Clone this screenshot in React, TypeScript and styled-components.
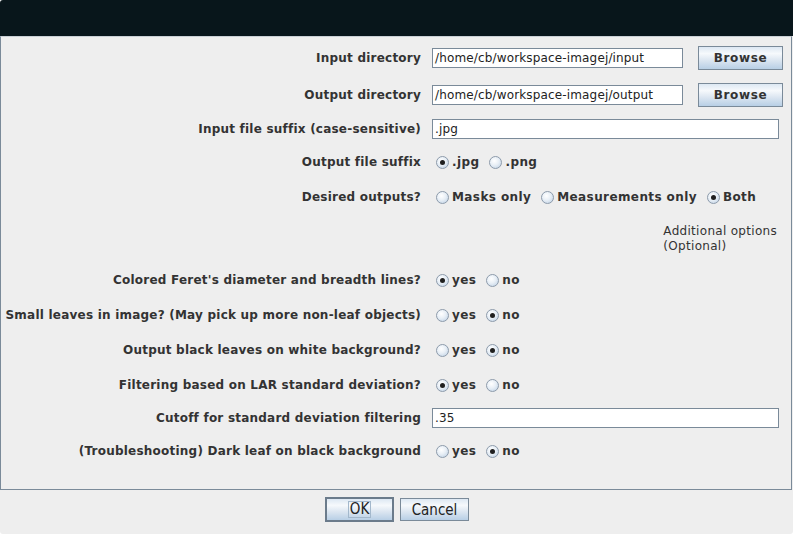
import React from 'react';
import styled, { createGlobalStyle } from 'styled-components';

const Global = createGlobalStyle`
  html, body { margin: 0; padding: 0; background: #ffffff; }
  body { font-family: "DejaVu Sans", "Liberation Sans", sans-serif; }
`;

const Window = styled.div`
  width: 793px;
  height: 534px;
  display: flex;
  flex-direction: column;
  background: #eeeeee;
  border-radius: 3px 0 3px 3px;
  overflow: hidden;
`;

const TitleBar = styled.div`
  height: 36px;
  flex-shrink: 0;
  background: #08161b;
`;

const Panel = styled.div`
  box-sizing: border-box;
  width: 792px;
  height: 454px;
  flex-shrink: 0;
  border: 1px solid #7a8a99;
  border-top-color: #c9d0d6;
  padding-top: 2px;
  display: flex;
  flex-direction: column;
`;

const Row = styled.div<{ $h: number }>`
  height: ${(p) => p.$h}px;
  display: grid;
  grid-template-columns: 420px 1fr;
  column-gap: 11px;
  align-items: center;
`;

const Label = styled.div`
  text-align: right;
  white-space: nowrap;
  font-weight: bold;
  font-size: 12px;
  letter-spacing: 0.22px;
  color: #333333;
`;

const Controls = styled.div`
  display: flex;
  align-items: center;
  padding-right: 12px;
`;

const TextField = styled.div<{ $w?: number }>`
  box-sizing: border-box;
  height: 20px;
  width: ${(p) => (p.$w ? `${p.$w}px` : '100%')};
  background: #ffffff;
  border: 1px solid #7a8a99;
  padding: 0 2px;
  display: flex;
  align-items: center;
  font-size: 12px;
  letter-spacing: 0.15px;
  color: #222222;
  white-space: nowrap;
  overflow: hidden;
`;

const BrowseButton = styled.button`
  box-sizing: border-box;
  width: 85px;
  height: 24px;
  margin-left: 15px;
  margin-right: -4px;
  border: 1px solid #7a8a99;
  background: linear-gradient(to bottom, #dde8f3 0%, #f6f9fc 30%, #dce6f1 60%, #b8cfe5 100%);
  font-family: "DejaVu Sans", sans-serif;
  font-weight: bold;
  font-size: 12px;
  letter-spacing: 0.6px;
  color: #333333;
  padding: 0;
`;

const RadioGroup = styled.div`
  display: flex;
  align-items: center;
  gap: 6px;
`;

const Option = styled.label`
  display: flex;
  align-items: center;
  padding-left: 4px;
  font-weight: bold;
  font-size: 12px;
  letter-spacing: 0.4px;
  color: #333333;
  white-space: nowrap;
`;

const Circle = styled.span<{ $on: boolean }>`
  box-sizing: border-box;
  width: 13px;
  height: 13px;
  margin-right: 3px;
  border-radius: 50%;
  border: 1px solid #8d9bab;
  background: radial-gradient(circle at 40% 35%, #ffffff 0%, #e8eff6 45%, #b9cde2 100%);
  display: flex;
  align-items: center;
  justify-content: center;
  &::after {
    content: '';
    display: ${(p) => (p.$on ? 'block' : 'none')};
    width: 5px;
    height: 5px;
    border-radius: 50%;
    background: #1f1f1f;
  }
`;

const Note = styled.div`
  margin-left: auto;
  margin-right: 2px;
  font-size: 12px;
  line-height: 15px;
  letter-spacing: 0.3px;
  color: #333333;
  white-space: nowrap;
`;

const ButtonBar = styled.div`
  flex: 1;
  display: flex;
  justify-content: center;
  align-items: flex-start;
  gap: 6px;
  padding-top: 7px;
  padding-left: 1px;
`;

const DialogButton = styled.button<{ $default?: boolean }>`
  box-sizing: border-box;
  width: 69px;
  height: ${(p) => (p.$default ? 25 : 23)}px;
  margin-top: ${(p) => (p.$default ? 0 : 1)}px;
  border: ${(p) => (p.$default ? '2px solid #6b7b8b' : '1px solid #7a8a99')};
  background: linear-gradient(to bottom, #dde8f3 0%, #f6f9fc 30%, #dce6f1 60%, #b8cfe5 100%);
  font-family: "DejaVu Sans Condensed", "DejaVu Sans", sans-serif;
  font-size: 15px;
  color: #222222;
  padding: 0;
  display: flex;
  align-items: center;
  justify-content: center;
`;

const Focus = styled.span`
  border: 1px solid #a3b8cc;
  padding: 0 1px;
  line-height: 15px;
`;

type Opt = { text: string; on: boolean };

function Radios({ options }: { options: Opt[] }) {
  return (
    <RadioGroup>
      {options.map((o) => (
        <Option key={o.text}>
          <Circle $on={o.on} />
          {o.text}
        </Option>
      ))}
    </RadioGroup>
  );
}

const yn = (yes: boolean): Opt[] => [
  { text: 'yes', on: yes },
  { text: 'no', on: !yes },
];

export default function App() {
  return (
    <>
      <Global />
      <Window>
        <TitleBar />
        <Panel>
          <Row $h={38}>
            <Label>Input directory</Label>
            <Controls>
              <TextField $w={251}>/home/cb/workspace-imagej/input</TextField>
              <BrowseButton>Browse</BrowseButton>
            </Controls>
          </Row>
          <Row $h={36}>
            <Label>Output directory</Label>
            <Controls>
              <TextField $w={251}>/home/cb/workspace-imagej/output</TextField>
              <BrowseButton>Browse</BrowseButton>
            </Controls>
          </Row>
          <Row $h={32}>
            <Label>Input file suffix (case-sensitive)</Label>
            <Controls>
              <TextField>.jpg</TextField>
            </Controls>
          </Row>
          <Row $h={34}>
            <Label>Output file suffix</Label>
            <Controls>
              <Radios options={[{ text: '.jpg', on: true }, { text: '.png', on: false }]} />
            </Controls>
          </Row>
          <Row $h={36}>
            <Label>Desired outputs?</Label>
            <Controls>
              <Radios
                options={[
                  { text: 'Masks only', on: false },
                  { text: 'Measurements only', on: false },
                  { text: 'Both', on: true },
                ]}
              />
            </Controls>
          </Row>
          <Row $h={48}>
            <Label />
            <Controls>
              <Note>
                Additional options
                <br />
                (Optional)
              </Note>
            </Controls>
          </Row>
          <Row $h={34}>
            <Label>Colored Feret's diameter and breadth lines?</Label>
            <Controls>
              <Radios options={yn(true)} />
            </Controls>
          </Row>
          <Row $h={36}>
            <Label>Small leaves in image? (May pick up more non-leaf objects)</Label>
            <Controls>
              <Radios options={yn(false)} />
            </Controls>
          </Row>
          <Row $h={34}>
            <Label>Output black leaves on white background?</Label>
            <Controls>
              <Radios options={yn(false)} />
            </Controls>
          </Row>
          <Row $h={36}>
            <Label>Filtering based on LAR standard deviation?</Label>
            <Controls>
              <Radios options={yn(true)} />
            </Controls>
          </Row>
          <Row $h={30}>
            <Label>Cutoff for standard deviation filtering</Label>
            <Controls>
              <TextField>.35</TextField>
            </Controls>
          </Row>
          <Row $h={36}>
            <Label>(Troubleshooting) Dark leaf on black background</Label>
            <Controls>
              <Radios options={yn(false)} />
            </Controls>
          </Row>
        </Panel>
        <ButtonBar>
          <DialogButton $default>
            <Focus>OK</Focus>
          </DialogButton>
          <DialogButton>Cancel</DialogButton>
        </ButtonBar>
      </Window>
    </>
  );
}
